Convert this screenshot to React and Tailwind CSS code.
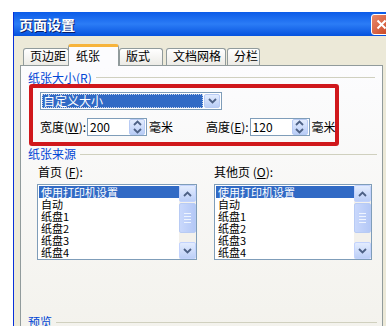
import React from 'react';

const PAPERS = ['使用打印机设置', '自动', '纸盘1', '纸盘2', '纸盘3', '纸盘4', 'A3'];

const Chevron = ({ up }) => (
    <svg width="9" height="6" viewBox="0 0 9 6">
        <path d={up ? 'M1 5 L4.5 1.5 L8 5' : 'M1 1 L4.5 4.5 L8 1'} stroke="#4d6185" strokeWidth="1.8" fill="none" />
    </svg>
);

const Spin = () => (
    <div className="w-[16px] h-[16px] rounded-[2px] border border-[#b8cbf4] bg-gradient-to-b from-[#e3ecfe] to-[#b9cdf6] flex flex-col items-center justify-center gap-[2px]">
        <Chevron up />
        <Chevron />
    </div>
);

const ListBox = ({ width }) => (
    <div className={`${width} h-[76px] border border-[#7f9db9] bg-white flex overflow-hidden`}>
        <div className="flex-1 pl-[1px] pt-[1px] text-[11px] leading-[12px] text-black">
            {PAPERS.map((p, i) => (
                <div key={p} className={`h-[12px] pl-[2px] ${i === 0 ? 'bg-[#316ac5] text-white' : ''}`}>{p}</div>
            ))}
        </div>
        <div className="w-[17px] flex flex-col bg-[#f3f1ec]">
            <div className="h-[17px] rounded-[2px] border border-[#c3d3fd] bg-gradient-to-b from-[#e3ecfe] to-[#bccff7] flex items-center justify-center"><Chevron up /></div>
            <div className="flex-1 py-[1px]">
                <div className="h-[30px] rounded-[2px] border border-[#b8cbf4] bg-gradient-to-r from-[#c9d8fc] to-[#b4c8f6] flex flex-col items-center justify-center gap-[2px]">
                    <div className="w-[7px] h-[1px] bg-[#eef4fe]" />
                    <div className="w-[7px] h-[1px] bg-[#eef4fe]" />
                    <div className="w-[7px] h-[1px] bg-[#eef4fe]" />
                    <div className="w-[7px] h-[1px] bg-[#eef4fe]" />
                </div>
            </div>
            <div className="h-[17px] rounded-[2px] border border-[#c3d3fd] bg-gradient-to-b from-[#e3ecfe] to-[#bccff7] flex items-center justify-center"><Chevron /></div>
        </div>
    </div>
);

const Tab = ({ label, width, active, className = '' }) => (
    <div className={`${width} ${className} ${active ? 'h-[22px] -mb-[1px] bg-[#fcfcfe] border-t-[3px] border-t-[#f7b43c] pt-[2px] pl-[7px] z-10' : 'h-[17px] bg-gradient-to-b from-white to-[#ecebe6] pl-[6px] border-t'} border-x border-[#919b9c] rounded-t-[3px] text-[12px] leading-[14px] text-black`}>
        {label}
    </div>
);

const Label = ({ text, k, rest = '' }) => (
    <span className="whitespace-nowrap">
        {text}(<span className="underline">{k}</span>){rest}
    </span>
);

export default function App() {
    return (
        <div className="w-[386px] h-[326px] bg-white overflow-hidden pt-[12px] pl-[13px] font-['Noto_Sans_CJK_SC','Liberation_Sans',sans-serif]">
            <div className="w-[385px] h-[330px] bg-[#ece9d8] border-l border-[#0831d9] flex flex-col">
                {/* title bar */}
                <div className="h-[24px] shrink-0 bg-gradient-to-b from-[#0a5be8] via-[#2b7cf6] to-[#0552de] flex items-center justify-between pl-[5px] pr-[6px]">
                    <span className="text-white font-bold text-[14px] leading-[14px] [text-shadow:1px_1px_0_#0a1e6a]">页面设置</span>
                    <div className="w-[21px] h-[21px] rounded-[3px] border border-white bg-gradient-to-br from-[#e98a6c] to-[#c7401a] flex items-center justify-center">
                        <svg width="11" height="11" viewBox="0 0 11 11">
                            <path d="M1.5 1.5 L9.5 9.5 M9.5 1.5 L1.5 9.5" stroke="white" strokeWidth="2" />
                        </svg>
                    </div>
                </div>

                {/* tabs */}
                <div className="h-[29px] shrink-0 flex items-end pl-[9px]">
                    <Tab label="页边距" width="w-[46px]" />
                    <Tab label="纸张" width="w-[51px]" active className="-ml-[1px]" />
                    <Tab label="版式" width="w-[44px]" />
                    <Tab label="文档网格" width="w-[60px]" className="ml-[3px]" />
                    <Tab label="分栏" width="w-[33px]" className="ml-[1px]" />
                </div>

                {/* panel */}
                <div className="ml-[6px] w-[363px] flex-1 border border-[#919b9c] bg-gradient-to-b from-[#fcfcfe] to-[#f3f2ec] text-[12px] leading-[12px] text-black flex flex-col">
                    <div className="h-[18px] px-[7px] pt-[5px] flex items-center gap-[4px]">
                        <span className="text-[#0046d5]"><Label text="纸张大小" k="R" /></span>
                        <div className="flex-1 h-[1px] bg-[#d0d0bf]" />
                    </div>

                    {/* highlighted box */}
                    <div className="ml-[8px] w-[310px] h-[62px] shrink-0 border-[4px] border-[#d0181c] rounded-[3px] pl-[7px] pt-[4px] overflow-hidden">
                        <div className="w-[182px] h-[18px] border border-[#7f9db9] bg-white flex p-[1px]">
                            <div className="flex-1 bg-[#316ac5] text-white text-[12px] leading-[14px] pl-[1px] outline outline-1 outline-dotted outline-[#c8d4ea] -outline-offset-1">自定义大小</div>
                            <div className="w-[16px] ml-[1px] rounded-[2px] border border-[#b8cbf4] bg-gradient-to-b from-[#e3ecfe] to-[#b9cdf6] flex items-center justify-center"><Chevron /></div>
                        </div>
                        <div className="mt-[8px] flex items-center whitespace-nowrap">
                            <Label text="宽度" k="W" rest=":" />
                            <div className="ml-[1px] shrink-0 w-[60px] h-[18px] border border-[#7f9db9] bg-white flex items-center justify-between pl-[2px] pr-[1px]">
                                <span>200</span>
                                <Spin />
                            </div>
                            <span className="ml-[2px] shrink-0">毫米</span>
                            <span className="ml-[33px] shrink-0"><Label text="高度" k="E" rest=":" /></span>
                            <div className="ml-[1px] shrink-0 w-[60px] h-[18px] border border-[#7f9db9] bg-white flex items-center justify-between pl-[2px] pr-[1px]">
                                <span>120</span>
                                <Spin />
                            </div>
                            <span className="ml-[2px] shrink-0">毫米</span>
                        </div>
                    </div>

                    <div className="mt-[2px] pl-[7px] pr-[5px] flex items-center gap-[4px]">
                        <span className="text-[#0046d5]">纸张来源</span>
                        <div className="flex-1 h-[1px] bg-[#d0d0bf]" />
                    </div>

                    <div className="mt-[6px] flex">
                        <div className="ml-[16px] flex flex-col">
                            <span className="pl-[1px]"><Label text="首页 " k="F" rest=":" /></span>
                            <div className="mt-[6px]"><ListBox width="w-[160px]" /></div>
                        </div>
                        <div className="ml-[17px] flex flex-col">
                            <span><Label text="其他页 " k="O" rest=":" /></span>
                            <div className="mt-[6px]"><ListBox width="w-[158px]" /></div>
                        </div>
                    </div>

                    <div className="mt-[56px] pl-[7px] pr-[5px] flex items-center gap-[4px]">
                        <span className="text-[#0046d5]">预览</span>
                        <div className="flex-1 h-[1px] bg-[#d0d0bf]" />
                    </div>
                </div>
            </div>
        </div>
    );
}
